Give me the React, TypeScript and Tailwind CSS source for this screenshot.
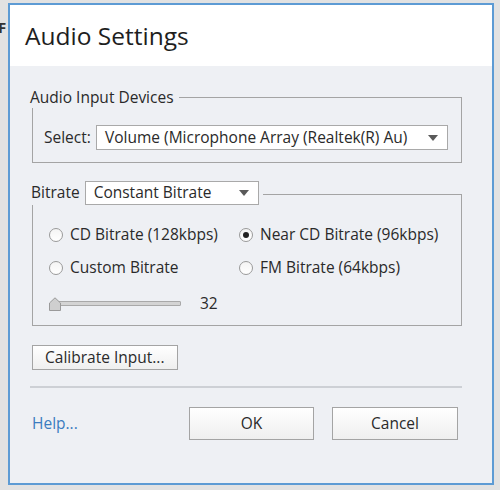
import React from "react";

const font = { fontFamily: '"Open Sans", "Noto Sans", Arial, sans-serif' };

function Radio({ checked }: { checked?: boolean }) {
  return (
    <span className="flex h-[14px] w-[14px] shrink-0 items-center justify-center rounded-full border border-[#9a9a9a] bg-gradient-to-b from-[#f4f4f4] to-white">
      {checked && <span className="h-[6px] w-[6px] rounded-full bg-[#222]" />}
    </span>
  );
}

function Arrow() {
  return (
    <svg width="10" height="6" viewBox="0 0 10 6" className="shrink-0">
      <path d="M0 0 L10 0 L5 6 Z" fill="#5a5a5a" />
    </svg>
  );
}

function Option({ label, checked }: { label: string; checked?: boolean }) {
  return (
    <label className="flex h-[22px] items-center gap-[7px] text-[15.5px] text-[#2a2a2a]">
      <Radio checked={checked} />
      {label}
    </label>
  );
}

export default function App() {
  return (
    <div className="flex h-[490px] w-[500px] overflow-hidden bg-[#e2e2e2]" style={font}>
      {/* bit of the window behind */}
      <div className="w-[8px] shrink-0 overflow-hidden pt-[20px]">
        <span className="-ml-[2px] block text-[15px] font-bold leading-none text-[#333]">F</span>
      </div>

      <div className="mt-[3px] flex h-[482px] w-[486px] shrink-0 flex-col border-2 border-[#5d9bd4]">
        {/* Title */}
        <div className="flex h-[61px] items-center bg-white pl-[15px] pt-[2px]">
          <h1 className="text-[24.5px] text-[#1e1e1e]">Audio Settings</h1>
        </div>

        {/* Body */}
        <div className="flex flex-1 flex-col bg-[#eef0f4] pl-[22px] pt-[31px] text-[15.5px] text-[#2a2a2a]">
          {/* Audio Input Devices */}
          <div className="relative h-[66px] w-[430px] border border-[#a4a4a4]">
            <span className="absolute -left-[3px] -top-[12px] bg-[#eef0f4] pr-[5px] leading-[22px]">
              Audio Input Devices
            </span>
            <div className="flex items-center pl-[11px] pr-[13px] pt-[27px]">
              <span>Select:</span>
              <div className="ml-auto flex h-[25px] w-[352px] items-center justify-between border border-[#a9a9a9] bg-white pl-[8px] pr-[9px]">
                <span className="whitespace-nowrap">Volume (Microphone Array (Realtek(R) Au)</span>
                <Arrow />
              </div>
            </div>
          </div>

          {/* Bitrate */}
          <div className="relative mt-[31px] h-[132px] w-[430px] border border-[#a4a4a4]">
            <div className="absolute -left-[2px] -top-[14px] flex items-center gap-[5px] bg-[#eef0f4] pr-[4px]">
              <span>Bitrate</span>
              <div className="flex h-[24px] w-[174px] items-center justify-between border border-[#a9a9a9] bg-white pl-[8px] pr-[9px]">
                <span>Constant Bitrate</span>
                <Arrow />
              </div>
            </div>

            <div className="grid grid-cols-[190px_1fr] gap-y-[11px] pl-[16px] pt-[29px]">
              <Option label="CD Bitrate (128kbps)" />
              <Option label="Near CD Bitrate (96kbps)" checked />
              <Option label="Custom Bitrate" />
              <Option label="FM Bitrate (64kbps)" />
            </div>

            <div className="mt-[13px] flex items-center pl-[15px]">
              <div className="relative flex h-[14px] w-[133px] items-center">
                <div className="ml-[10px] h-[5px] flex-1 rounded-[1px] border border-[#a9a9a9] bg-[#d4d4d4]" />
                <svg width="14" height="14" viewBox="0 0 14 14" className="absolute left-0 top-0">
                  <path d="M1.5 13.5 V6 L7 0.8 L12.5 6 V13.5 Z" fill="#cfcfcf" stroke="#9a9a9a" strokeLinejoin="round" />
                </svg>
              </div>
              <span className="ml-[19px]">32</span>
            </div>
          </div>

          {/* Calibrate */}
          <button className="mt-[19px] flex h-[25px] w-[146px] items-center border border-[#a4a4a4] bg-gradient-to-b from-white to-[#efefef] pl-[12px] text-[#2a2a2a]">
            Calibrate Input...
          </button>

          <div className="-ml-[2px] mt-[16px] h-[2px] w-[432px] bg-[#cdd0d5]" />

          {/* Footer */}
          <div className="mt-[19px] flex items-center">
            <a className="w-[157px] text-[#3b7cc0]">Help...</a>
            <button className="flex h-[33px] w-[125px] items-center justify-center border border-[#a4a4a4] bg-gradient-to-b from-white to-[#efefef] text-[#2a2a2a]">
              OK
            </button>
            <button className="ml-[18px] flex h-[33px] w-[126px] items-center justify-center border border-[#a4a4a4] bg-gradient-to-b from-white to-[#efefef] text-[#2a2a2a]">
              Cancel
            </button>
          </div>
        </div>
      </div>
    </div>
  );
}
